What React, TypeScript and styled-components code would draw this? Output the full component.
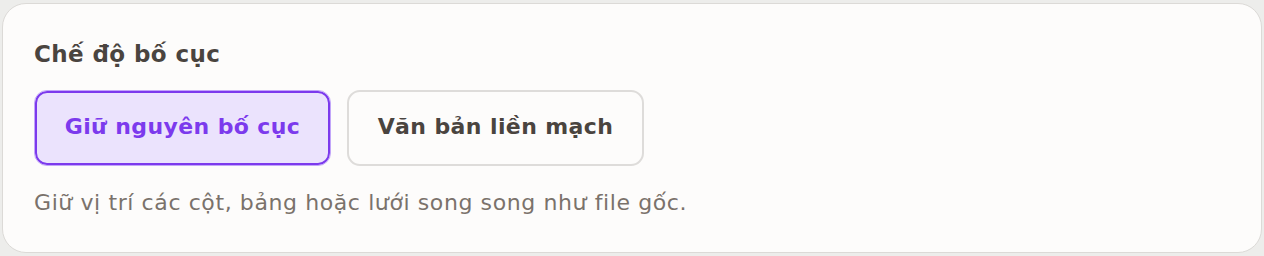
import React, { useState } from "react";
import styled, { createGlobalStyle } from "styled-components";

const Global = createGlobalStyle`
  html, body { margin: 0; padding: 0; background: #ededeb; }
  body { font-family: "DejaVu Sans", "Noto Sans", sans-serif; }
`;

const Page = styled.div`
  padding: 3px 2px 0 2px;
`;

const Card = styled.section`
  background: #fdfcfb;
  border: 1px solid #dcdad7;
  border-radius: 24px;
  height: 250px;
  box-sizing: border-box;
  padding: 35px 31px 0 31px;
  display: flex;
  flex-direction: column;
`;

const Title = styled.h2`
  margin: 0;
  font-size: 23px;
  line-height: 30px;
  font-weight: 700;
  letter-spacing: 0.4px;
  color: #4a443f;
`;

const Options = styled.div`
  display: flex;
  gap: 16px;
  margin-top: 21px;
`;

const Option = styled.button<{ $active: boolean }>`
  font-family: inherit;
  width: 297px;
  height: 76px;
  padding: 0 0 4px 0;
  box-sizing: border-box;
  border-radius: 13px;
  font-size: 22px;
  font-weight: 700;
  letter-spacing: 0.4px;
  cursor: pointer;
  white-space: nowrap;
  background: ${(p) => (p.$active ? "#ebe3fd" : "#fdfcfb")};
  color: ${(p) => (p.$active ? "#7c3aed" : "#4a443f")};
  border: ${(p) => (p.$active ? "1px solid #c2a6f9" : "2px solid #dedcda")};
  box-shadow: ${(p) => (p.$active ? "inset 0 0 0 2px #7c3aed" : "none")};
`;

const Desc = styled.p`
  margin: 24px 0 0 0;
  font-size: 22px;
  line-height: 26px;
  letter-spacing: 0.6px;
  color: #7a726b;
`;

export default function App() {
  const [mode, setMode] = useState(0);
  return (
    <>
      <Global />
      <Page>
        <Card>
          <Title>Chế độ bố cục</Title>
          <Options>
            <Option $active={mode === 0} onClick={() => setMode(0)}>
              Giữ nguyên bố cục
            </Option>
            <Option $active={mode === 1} onClick={() => setMode(1)}>
              Văn bản liền mạch
            </Option>
          </Options>
          <Desc>Giữ vị trí các cột, bảng hoặc lưới song song như file gốc.</Desc>
        </Card>
      </Page>
    </>
  );
}
